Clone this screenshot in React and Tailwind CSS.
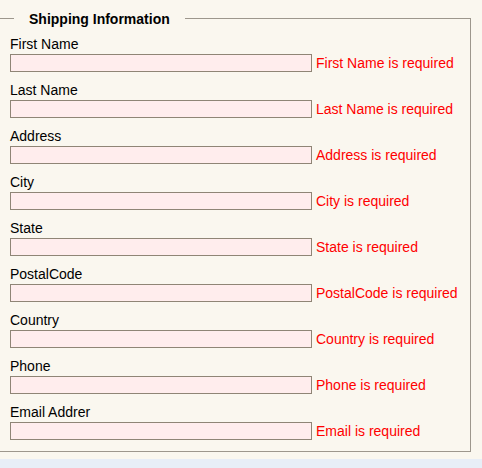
import React from "react";

const fields = [
  ["First Name", "First Name is required"],
  ["Last Name", "Last Name is required"],
  ["Address", "Address is required"],
  ["City", "City is required"],
  ["State", "State is required"],
  ["PostalCode", "PostalCode is required"],
  ["Country", "Country is required"],
  ["Phone", "Phone is required"],
  ["Email Addrer", "Email is required"],
];

export default function App() {
  return (
    <div className="min-h-[468px] bg-[#e8eef7] font-['Liberation_Sans',Arial,sans-serif] text-[14px] text-black">
      <div className="h-[459px] bg-[#faf7ef] pt-[9px]">
        <fieldset className="ml-[-1px] w-[472px] border border-[#9d978d] pl-[10px] pb-[11px]">
          <legend className="ml-[4px] px-[15px] pt-[2px] text-[14px] font-bold leading-[16px]">
            Shipping Information
          </legend>
          <div className="flex flex-col gap-[10px] pt-[9px]">
            {fields.map(([label, err]) => (
              <div key={label} className="flex flex-col">
                <label className="block leading-[16px]">{label}</label>
                <div className="mt-[2px] flex items-center">
                  <input
                    type="text"
                    className="h-[18px] w-[302px] border border-[#8f8576] bg-[#ffeded] outline-none"
                  />
                  <span className="ml-[4px] leading-[16px] text-[#ff0000]">{err}</span>
                </div>
              </div>
            ))}
          </div>
        </fieldset>
      </div>
    </div>
  );
}
